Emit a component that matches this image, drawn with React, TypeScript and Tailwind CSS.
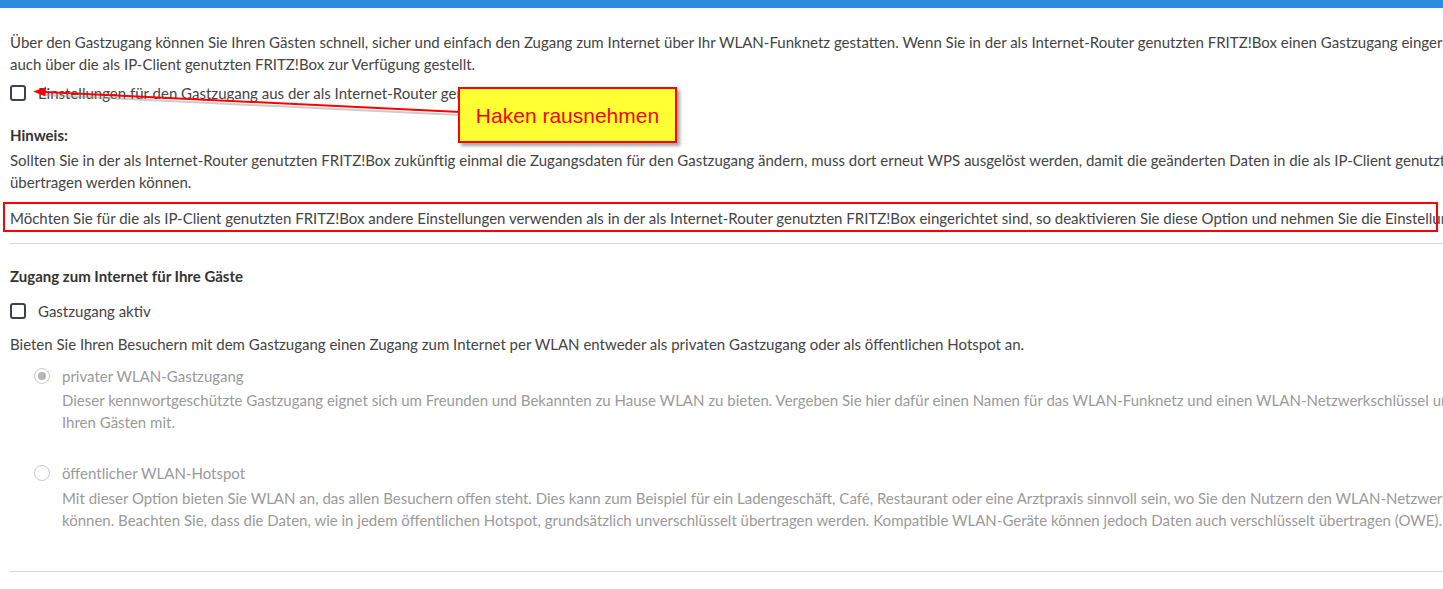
function Checkbox() {
  return <span className="block h-4 w-4 shrink-0 rounded-[3px] border-2 border-[#3d434b] bg-white" />;
}

export default function App() {
  return (
    <div className="relative h-[589px] w-full overflow-hidden bg-white font-['Lato',sans-serif] text-[15px] leading-[22px] text-[#444]">
      <div className="h-2 bg-[#2a8de0]" />
      <div className="w-[1900px] px-[10px]">
        <p className="mt-[23px] whitespace-nowrap">
          Über den Gastzugang können Sie Ihren Gästen schnell, sicher und einfach den Zugang zum Internet über Ihr
          WLAN-Funknetz gestatten. Wenn Sie in der als Internet-Router genutzten FRITZ!Box einen Gastzugang eingerichtet
          haben, wird dieser
          <br />
          auch über die als IP-Client genutzten FRITZ!Box zur Verfügung gestellt.
        </p>

        <label className="mt-[7px] flex items-center gap-3 whitespace-nowrap">
          <Checkbox />
          <span>Einstellungen für den Gastzugang aus der als Internet-Router genutzten FRITZ!Box übernehmen</span>
        </label>

        <p className="mt-5 font-bold text-[#333]">Hinweis:</p>
        <p className="mt-[3px] whitespace-nowrap">
          Sollten Sie in der als Internet-Router genutzten FRITZ!Box zukünftig einmal die Zugangsdaten für den Gastzugang
          ändern, muss dort erneut WPS ausgelöst werden, damit die geänderten Daten in die als IP-Client genutzten
          FRITZ!Box
          <br />
          übertragen werden können.
        </p>

        <div className="relative mt-[14px]">
          <p className="whitespace-nowrap">
            Möchten Sie für die als IP-Client genutzten FRITZ!Box andere Einstellungen verwenden als in der als
            Internet-Router genutzten FRITZ!Box eingerichtet sind, so deaktivieren Sie diese Option und nehmen Sie die
            Einstellungen hier vor.
          </p>
          {/* red highlight frame from the annotation */}
          <div className="absolute -top-[5px] -bottom-[3px] -left-[7px] w-[1435px] border-2 border-[#ff0000]" />
        </div>

        <hr className="mt-[14px] border-t border-[#d9d9d9]" />

        <h3 className="mt-[21px] font-bold text-[#333]">Zugang zum Internet für Ihre Gäste</h3>

        <label className="mt-[13px] flex items-center gap-3">
          <Checkbox />
          <span>Gastzugang aktiv</span>
        </label>

        <p className="mt-[11px] whitespace-nowrap">
          Bieten Sie Ihren Besuchern mit dem Gastzugang einen Zugang zum Internet per WLAN entweder als privaten
          Gastzugang oder als öffentlichen Hotspot an.
        </p>

        <div className="pl-6 text-[#9a9a9a]">
          <div className="mt-[10px] flex items-center gap-3">
            <span className="flex h-4 w-4 items-center justify-center rounded-full border border-[#c9c9c9]">
              <span className="h-2 w-2 rounded-full bg-[#b5b5b5]" />
            </span>
            <span>privater WLAN-Gastzugang</span>
          </div>
          <p className="mt-[2px] whitespace-nowrap pl-[28px]">
            Dieser kennwortgeschützte Gastzugang eignet sich um Freunden und Bekannten zu Hause WLAN zu bieten. Vergeben
            Sie hier dafür einen Namen für das WLAN-Funknetz und einen WLAN-Netzwerkschlüssel und teilen Sie diesen
            <br />
            Ihren Gästen mit.
          </p>

          <div className="mt-[29px] flex items-center gap-3">
            <span className="h-4 w-4 rounded-full border border-[#c9c9c9]" />
            <span>öffentlicher WLAN-Hotspot</span>
          </div>
          <p className="mt-[3px] whitespace-nowrap pl-[28px]">
            Mit dieser Option bieten Sie WLAN an, das allen Besuchern offen steht. Dies kann zum Beispiel für ein
            Ladengeschäft, Café, Restaurant oder eine Arztpraxis sinnvoll sein, wo Sie den Nutzern den
            WLAN-Netzwerkschlüssel nicht mitteilen
            <br />
            können. Beachten Sie, dass die Daten, wie in jedem öffentlichen Hotspot, grundsätzlich unverschlüsselt
            übertragen werden. Kompatible WLAN-Geräte können jedoch Daten auch verschlüsselt übertragen (OWE).
          </p>
        </div>

        <hr className="mt-10 border-t border-[#d9d9d9]" />
      </div>

      {/* annotation: arrow + callout */}
      <svg className="absolute top-0 left-0" width="470" height="130" viewBox="0 0 470 130">
        <line x1="46" y1="95" x2="460" y2="115" stroke="#9a9a9a" strokeWidth="2" opacity="0.5" />
        <line x1="44" y1="92" x2="460" y2="112" stroke="#ff0000" strokeWidth="2" />
        <polygon points="33,91.5 46,87 45.5,96.5" fill="#ff0000" />
      </svg>
      <div className="absolute top-[87px] left-[458px] flex h-[56px] w-[219px] items-center justify-center border-2 border-[#ff0000] bg-[#ffff33] font-['Liberation_Sans',Arial,sans-serif] text-[21px] leading-none text-[#ff0000] shadow-[3px_3px_3px_rgba(0,0,0,0.35)]">
        Haken rausnehmen
      </div>
    </div>
  );
}
